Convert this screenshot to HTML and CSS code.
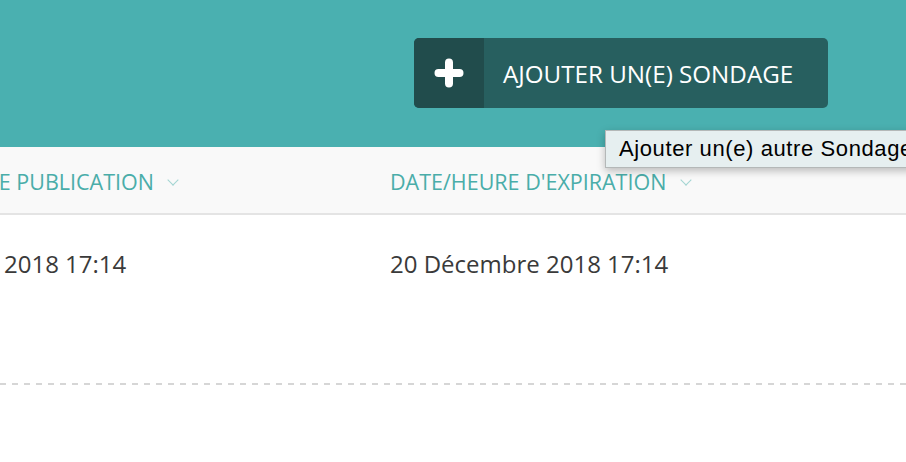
FILE: index.html
```html
<!DOCTYPE html>
<html lang="fr">
<head>
    <meta charset="UTF-8">
    <meta name="viewport" content="width=device-width, initial-scale=1.0">
    <title>Sondages</title>
    <link rel="stylesheet" href="styles.css">
</head>
<body>
    <!-- Bandeau du haut avec le bouton d'ajout -->
    <header class="topbar">
        <button class="add-btn" type="button">
            <span class="add-icon">
                <svg width="30" height="30" viewBox="0 0 30 30">
                    <path d="M15 4.5v21M4.5 15h21" stroke="#fff" stroke-width="8" stroke-linecap="round" fill="none"/>
                </svg>
            </span>
            <span class="add-label">Ajouter un(e) sondage</span>
        </button>
    </header>

    <div class="tooltip">Ajouter un(e) autre Sondage</div>

    <!-- Liste des sondages -->
    <div class="list">
        <div class="list-head">
            <div class="col-title">Date/heure de publication <span class="chevron"></span></div>
            <div class="col-title">Date/heure d'expiration <span class="chevron"></span></div>
        </div>
        <div class="list-row">
            <div class="cell">20 Décembre 2018 17:14</div>
            <div class="cell">20 Décembre 2018 17:14</div>
        </div>
        <div class="divider"></div>
    </div>
</body>
</html>
```

FILE: styles.css
```css
body {
    margin: 0;
    font-family: "Open Sans", "Noto Sans", sans-serif;
    background: #fff;
    overflow: hidden;
}

/* Bandeau teal */
.topbar {
    height: 147px;
    background-color: #4ab0b0;
    display: flex;
    justify-content: flex-end;
    align-items: flex-start;
    padding-right: 78px;
}

.add-btn {
    margin-top: 38px;
    height: 70px;
    width: 414px;
    display: flex;
    align-items: stretch;
    padding: 0;
    border: none;
    border-radius: 5px;
    overflow: hidden;
    background-color: #275f5f;
    color: #fff;
    cursor: pointer;
    font-family: inherit;
}

.add-icon {
    width: 70px;
    background-color: #214c4c;
    display: flex;
    align-items: center;
    justify-content: center;
}

.add-label {
    display: flex;
    align-items: center;
    padding-left: 19px;
    font-size: 24.2px;
    font-weight: 500;
    text-transform: uppercase;
}

/* Infobulle du navigateur */
.tooltip {
    position: absolute;
    left: 605px;
    top: 130px;
    height: 36px;
    padding: 0 13px;
    line-height: 36px;
    white-space: nowrap;
    font-family: "Liberation Sans", Arial, sans-serif;
    font-size: 22px;
    letter-spacing: 0.6px;
    color: #000;
    background: #e6eff0;
    border: 1px solid #b4b8b8;
    box-shadow: 0 3px 8px rgba(0, 0, 0, 0.25);
}

/* Tableau */
.list {
    margin-left: -152px;
}

.list-head,
.list-row {
    display: grid;
    grid-template-columns: 542px 1fr;
}

.list-head {
    height: 66px;
    background: #f9f9f9;
    border-bottom: 2px solid #e4e4e4;
    align-items: center;
}

.col-title {
    padding-top: 3px;
    font-size: 21.5px;
    color: #4aada9;
    text-transform: uppercase;
    white-space: nowrap;
}

.chevron {
    display: inline-block;
    width: 7px;
    height: 7px;
    margin-left: 10px;
    border-right: 1.5px solid #a2d5d2;
    border-bottom: 1.5px solid #a2d5d2;
    transform: translateY(-6px) rotate(45deg);
}

.cell {
    padding: 32px 0 103px;
    font-size: 24px;
    line-height: 33px;
    color: #3a3a3a;
    white-space: nowrap;
}

.divider {
    height: 2px;
    margin-left: 152px;
    background: repeating-linear-gradient(to right, #d6d6d6 0 6px, transparent 6px 12px);
}
```
